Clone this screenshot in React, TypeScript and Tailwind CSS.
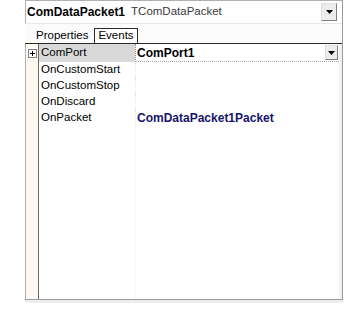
import React from "react";

const Arrow = () => (
  <svg width="7" height="4" viewBox="0 0 7 4">
    <path d="M0 0H7L3.5 4Z" fill="#000" />
  </svg>
);

const DropBtn = ({ cls }: { cls: string }) => (
  <div className={`${cls} flex items-center justify-center bg-[#ececec] border border-t-[#e0e0e0] border-l-[#e0e0e0] border-r-[#808080] border-b-[#808080]`}>
    <Arrow />
  </div>
);

export default function App() {
  const rows = ["OnCustomStart", "OnCustomStop", "OnDiscard", "OnPacket"];
  return (
    <div className="w-[351px] h-[311px] bg-white text-black text-[11px] leading-none" style={{ fontFamily: '"Liberation Sans", Arial, sans-serif' }}>
      <div className="ml-[25px] w-[318px] h-[300px] flex flex-col border-r border-r-[#9a9a9a] border-b border-b-[#9a9a9a]">
        {/* combobox */}
        <div className="h-[23px] flex items-center border-l border-t border-[#b0b0b0] pr-[5px] pb-[1px] bg-white">
          <span className="font-bold ml-[1px] text-[12px]">ComDataPacket1</span>
          <span className="ml-[6px] text-[#3a3a3a] text-[11.5px]">TComDataPacket</span>
          <div className="ml-auto">
            <DropBtn cls="w-[16px] h-[18px]" />
          </div>
        </div>
        {/* tabs */}
        <div className="h-[21px] flex items-end border-b border-b-[#2a2a2a] pl-[5px] bg-[#fbfbfb] border-t border-t-[#e8e8e8]">
          <div className="h-[15px] px-[6px] flex items-center text-[11.5px]">Properties</div>
          <div className="h-[15px] px-[3px] flex items-center border-l border-t border-r border-[#2a2a2a] bg-white text-[11.5px]">Events</div>
        </div>
        {/* grid */}
        <div className="flex-1 flex border-l border-[#b0b0b0] relative">
          <div className="w-[12px] bg-[#fdf9f0] flex flex-col">
            <div className="h-[18px] flex items-center justify-center">
              <div className="w-[9px] h-[9px] border border-[#808080] bg-white flex items-center justify-center relative">
                <div className="absolute w-[5px] h-[1px] bg-black" />
                <div className="absolute w-[1px] h-[5px] bg-black" />
              </div>
            </div>
          </div>
          <div className="flex-1 flex flex-col border-l border-[#6a6a6a]">
            <div className="h-[18px] flex">
              <div className="w-[96px] bg-[#d9d9d9] flex items-center pl-[2px] text-[11.5px]">ComPort</div>
              <div className="flex-1 flex items-center pl-[1px] border-l border-dotted border-l-[#909090] border-b border-b-[#a8a8a8] pr-[1px]">
                <span className="font-bold text-[12px]">ComPort1</span>
                <div className="ml-auto">
                  <DropBtn cls="w-[13px] h-[15px]" />
                </div>
              </div>
            </div>
            {rows.map((r) => (
              <div key={r} className="h-[16px] flex">
                <div className="w-[96px] flex items-center pl-[2px] text-[11.5px]">{r}</div>
                <div className="flex-1 flex items-center pl-[1px] border-l border-dotted border-l-[#e4e4e4]">
                  {r === "OnPacket" && <span className="font-bold text-[12px] text-[#16166a]">ComDataPacket1Packet</span>}
                </div>
              </div>
            ))}
            <div className="flex-1 flex">
              <div className="w-[96px]" />
              <div className="flex-1 border-l border-dotted border-l-[#f0f0f0]" />
            </div>
          </div>
          <div className="w-[3px] bg-[#f2f2f2]" />
        </div>
      </div>
      <div className="ml-[25px] w-[318px] h-[3px] bg-[#eeeeee]" />
    </div>
  );
}
